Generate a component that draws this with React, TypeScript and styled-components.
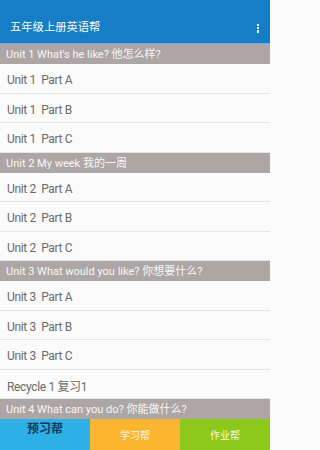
import React from "react";
import styled, { createGlobalStyle } from "styled-components";

const GlobalStyle = createGlobalStyle`
  html, body {
    margin: 0;
    padding: 0;
    background: #fbfbfb;
  }
  body {
    font-family: Roboto, "Noto Sans", "Noto Sans CJK SC", sans-serif;
  }
`;

const Screen = styled.div`
  width: 270px;
  height: 450px;
  display: flex;
  flex-direction: column;
  overflow: hidden;
  background: #fbfbfb;
`;

const AppBar = styled.header`
  height: 44px;
  flex-shrink: 0;
  background: #167ec6;
  border-bottom: 1.5px solid #68aee0;
  display: flex;
  align-items: flex-end;
  justify-content: space-between;
  padding: 0 11px 8px 10px;
  box-sizing: border-box;
  color: #ffffff;
`;

const Title = styled.h1`
  margin: 0;
  font-size: 11.3px;
  font-weight: 400;
  line-height: 14px;
`;

const MenuButton = styled.div`
  display: flex;
  flex-direction: column;
  gap: 1.2px;
  padding-bottom: 2.5px;
`;

const Dot = styled.span`
  width: 2.4px;
  height: 2.2px;
  background: #dff0fb;
`;

const List = styled.div`
  flex: 1;
  overflow: hidden;
`;

const SectionHeader = styled.div`
  height: 20px;
  box-sizing: border-box;
  padding: 1px 0 0 6px;
  background: #aca6a6;
  color: #f7f7f7;
  font-size: 11px;
  line-height: 19px;
  white-space: nowrap;
`;

const Item = styled.div`
  height: 29.5px;
  box-sizing: border-box;
  display: flex;
  align-items: center;
  padding: 4px 0 0 7px;
  font-size: 12px;
  letter-spacing: -0.35px;
  color: #6a6a6a;
  background: #fbfbfb;
  border-bottom: 1px solid #e5e5e5;
  white-space: pre;
`;

const TabBar = styled.nav`
  height: 31px;
  flex-shrink: 0;
  display: grid;
  grid-template-columns: 1fr 1fr 1fr;
`;

const Tab = styled.div<{ $bg: string; $active?: boolean }>`
  background: ${({ $bg }) => $bg};
  display: flex;
  justify-content: center;
  align-items: flex-start;
  padding-top: ${({ $active }) => ($active ? "2px" : "11px")};
  box-sizing: border-box;
  font-size: ${({ $active }) => ($active ? "12px" : "10px")};
  line-height: ${({ $active }) => ($active ? "16px" : "12px")};
  font-weight: ${({ $active }) => ($active ? 700 : 400)};
  color: ${({ $active }) => ($active ? "#13395a" : "#fdf6e6")};
`;

type Section = {
  title: string;
  items: string[];
};

const SECTIONS: Section[] = [
  {
    title: "Unit 1 What's he like? 他怎么样?",
    items: ["Unit 1  Part A", "Unit 1  Part B", "Unit 1  Part C"],
  },
  {
    title: "Unit 2 My week 我的一周",
    items: ["Unit 2  Part A", "Unit 2  Part B", "Unit 2  Part C"],
  },
  {
    title: "Unit 3 What would you like? 你想要什么?",
    items: ["Unit 3  Part A", "Unit 3  Part B", "Unit 3  Part C", "Recycle 1 复习1"],
  },
  {
    title: "Unit 4 What can you do? 你能做什么?",
    items: [],
  },
];

export default function App() {
  return (
    <Screen>
      <GlobalStyle />
      <AppBar>
        <Title>五年级上册英语帮</Title>
        <MenuButton>
          <Dot />
          <Dot />
          <Dot />
        </MenuButton>
      </AppBar>
      <List>
        {SECTIONS.map((section) => (
          <div key={section.title}>
            <SectionHeader>{section.title}</SectionHeader>
            {section.items.map((item) => (
              <Item key={item}>{item}</Item>
            ))}
          </div>
        ))}
      </List>
      <TabBar>
        <Tab $bg="#2cb0e6" $active>
          预习帮
        </Tab>
        <Tab $bg="#fbb52e">学习帮</Tab>
        <Tab $bg="#8dc81b">作业帮</Tab>
      </TabBar>
    </Screen>
  );
}
